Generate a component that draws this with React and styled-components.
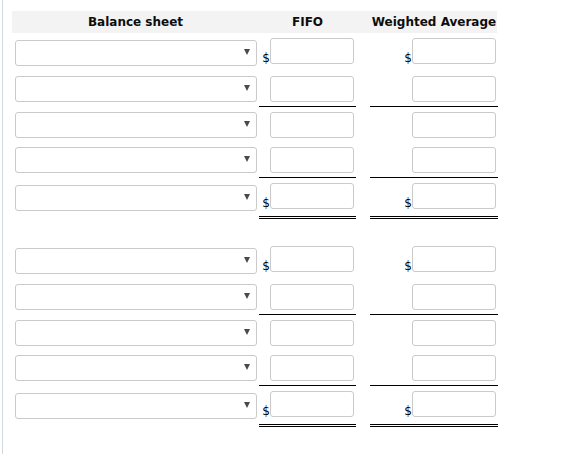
import React from 'react'
import styled, { createGlobalStyle } from 'styled-components'

const GlobalStyle = createGlobalStyle`
  html, body {
    margin: 0;
    background: #fff;
    font-family: "DejaVu Sans", Verdana, sans-serif;
  }
`

// row kinds: plain, total (single rule under), grand ($ + double rule)
const groups = [
  [
    { dollar: true, rule: 'none' },
    { dollar: false, rule: 'single' },
    { dollar: false, rule: 'none' },
    { dollar: false, rule: 'single' },
    { dollar: true, rule: 'double' }
  ],
  [
    { dollar: true, rule: 'none' },
    { dollar: false, rule: 'single' },
    { dollar: false, rule: 'none' },
    { dollar: false, rule: 'single' },
    { dollar: true, rule: 'double' }
  ]
]

const App = () => {
  return (
    <Page>
      <GlobalStyle />
      <Sheet>
        <HeaderRow>
          <HeadCell>Balance sheet</HeadCell>
          <HeadCell>FIFO</HeadCell>
          <span />
          <HeadCell>Weighted Average</HeadCell>
        </HeaderRow>
        {groups.map((rows, g) => (
          <Group key={g} $first={g === 0}>
            {rows.map((row, i) => (
              <Row key={i}>
                <SelectCell $dollar={row.dollar}>
                  <SelectWrap>
                    <Select defaultValue=''>
                      <option value='' />
                    </Select>
                  </SelectWrap>
                </SelectCell>
                <AmountCell $dollar={row.dollar} $rule={row.rule}>
                  {row.dollar && <Dollar>$</Dollar>}
                  <Amount type='text' />
                </AmountCell>
                <span />
                <AmountCell $dollar={row.dollar} $rule={row.rule}>
                  {row.dollar && <Dollar>$</Dollar>}
                  <Amount type='text' />
                </AmountCell>
              </Row>
            ))}
          </Group>
        ))}
      </Sheet>
    </Page>
  )
}

export default App

const Page = styled.div`
  margin-left: 2px;
  border-left: 1px solid #d2d8e0;
  min-height: 100vh;
  box-sizing: border-box;
  padding: 11px 0 0 9px;
`

const Sheet = styled.div`
  width: 486px;
  display: flex;
  flex-direction: column;
`

const columns = `247px 97px 14px 128px`

const HeaderRow = styled.div`
  display: grid;
  grid-template-columns: ${columns};
  height: 22px;
  width: 485px;
  background: #f3f3f3;
  align-items: center;
`

const HeadCell = styled.div`
  text-align: center;
  font-weight: bold;
  font-size: 12px;
  color: #0d0d0d;
  white-space: nowrap;
`

const Group = styled.div`
  display: flex;
  flex-direction: column;
  margin-top: ${(p) => (p.$first ? '0' : '22px')};
`

const Row = styled.div`
  display: grid;
  grid-template-columns: ${columns};
  align-items: stretch;
`

const SelectCell = styled.div`
  padding: ${(p) => (p.$dollar ? '7px 0 0 3px' : '5px 0 0 3px')};
`

const SelectWrap = styled.div`
  position: relative;
  width: 242px;

  &::after {
    content: '';
    position: absolute;
    right: 7px;
    top: 9px;
    border-left: 3.5px solid transparent;
    border-right: 3.5px solid transparent;
    border-top: 6px solid #4a4a4a;
    pointer-events: none;
  }
`

const Select = styled.select`
  appearance: none;
  display: block;
  width: 242px;
  height: 26px;
  box-sizing: border-box;
  border: 1px solid #cacaca;
  border-radius: 3px;
  background: #fff;
  margin: 0;
  font-family: inherit;
  font-size: 12px;
`

const ruleStyle = {
  none: 'none',
  single: '1px solid #000',
  double: '3px double #000'
}

const AmountCell = styled.div`
  display: flex;
  justify-content: flex-end;
  align-items: flex-end;
  padding: 5px 2px ${(p) => (p.$dollar ? '7px' : '4px')} 0;
  border-bottom: ${(p) => ruleStyle[p.$rule]};
`

const Dollar = styled.span`
  font-size: 12px;
  line-height: 1;
  color: #000;
`

const Amount = styled.input`
  display: block;
  width: 84px;
  height: 26px;
  box-sizing: border-box;
  margin: 0;
  border: 1px solid #cacaca;
  border-radius: 3px;
  background: #fff;
  font-family: inherit;
  font-size: 12px;
`
